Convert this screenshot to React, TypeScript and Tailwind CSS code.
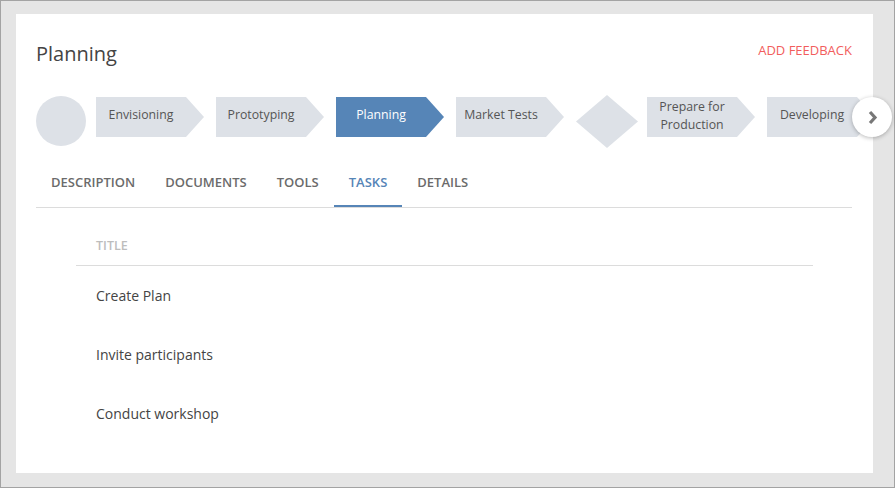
import React from "react";

type Step = { label: React.ReactNode; active?: boolean; multi?: boolean };

const STEPS_BEFORE: Step[] = [
  { label: "Envisioning" },
  { label: "Prototyping" },
  { label: "Planning", active: true },
  { label: "Market Tests" },
];

const STEPS_AFTER: Step[] = [
  {
    label: (
      <>
        Prepare for
        <br />
        Production
      </>
    ),
    multi: true,
  },
  { label: "Developing" },
];

const TABS = ["Description", "Documents", "Tools", "Tasks", "Details"];
const TASKS = ["Create Plan", "Invite participants", "Conduct workshop"];

function Chevron({ label, active, multi }: Step) {
  return (
    <div
      className={`mt-[2px] flex h-10 w-[108px] shrink-0 items-center justify-center pr-[18px] text-center text-[12.3px] leading-[18px] ${
        multi ? "pb-[2px]" : "pb-1"
      } ${
        active ? "bg-[#5685b7] text-white" : "bg-[#dde1e7] text-[#555]"
      } [clip-path:polygon(0_0,90px_0,108px_50%,90px_100%,0_100%)]`}
    >
      <span>{label}</span>
    </div>
  );
}

export default function App() {
  return (
    <div
      className="h-[488px] w-[895px] border border-[#a3a3a3] bg-[#e5e5e5] pl-[15px] pt-[13px]"
      style={{ fontFamily: "'Open Sans', 'Liberation Sans', sans-serif" }}
    >
      <div className="relative h-[459px] w-[857px] bg-white pl-5 pr-[21px] pt-[26px]">
        <div className="flex items-start justify-between">
          <h1 className="text-[20px] leading-[28px] text-[#444]">Planning</h1>
          <button className="mt-px text-[13px] leading-[18px] text-[#f25d5d]">
            ADD FEEDBACK
          </button>
        </div>

        <div className="mt-[27px] flex h-[53px] items-start">
          <div className="mt-px h-[50px] w-[50px] shrink-0 rounded-full bg-[#dde1e7]" />
          <div className="ml-[10px] flex gap-3">
            {STEPS_BEFORE.map((s, i) => (
              <Chevron key={i} {...s} />
            ))}
          </div>
          <div className="ml-[12px] h-[53px] w-[62px] shrink-0 bg-[#dde1e7] [clip-path:polygon(50%_0,100%_50%,50%_100%,0_50%)]" />
          <div className="ml-[9px] flex gap-3">
            {STEPS_AFTER.map((s, i) => (
              <Chevron key={i} {...s} />
            ))}
          </div>
        </div>

        <button className="absolute right-[-19px] top-[83px] flex h-10 w-10 items-center justify-center rounded-full bg-white shadow-[0_1px_4px_rgba(0,0,0,0.28)]">
          <svg width="11" height="15" viewBox="0 0 11 15">
            <polyline
              points="3,2 8,7.5 3,13"
              fill="none"
              stroke="#777"
              strokeWidth="3.2"
            />
          </svg>
        </button>

        <div className="mt-[11px] flex border-b border-[#dcdcdc]">
          {TABS.map((t) => {
            const active = t === "Tasks";
            return (
              <div
                key={t}
                className={`border-b-2 px-[15px] pb-[14px] pt-[14px] text-[13px] font-semibold uppercase leading-[18px] ${
                  active
                    ? "border-[#5685b7] text-[#5685b7]"
                    : "border-transparent text-[#6b6b6b]"
                }`}
              >
                {t}
              </div>
            );
          })}
        </div>

        <div className="ml-10 mr-[39px] mt-[30px]">
          <div className="border-b border-[#dcdcdc] pb-[11px] pl-5 text-[12.5px] font-semibold leading-4 text-[#bdbdbd]">
            TITLE
          </div>
          {TASKS.map((t) => (
            <div
              key={t}
              className="pb-[19px] pl-5 pt-5 text-[14px] leading-5 text-[#444]"
            >
              {t}
            </div>
          ))}
        </div>
      </div>
    </div>
  );
}
